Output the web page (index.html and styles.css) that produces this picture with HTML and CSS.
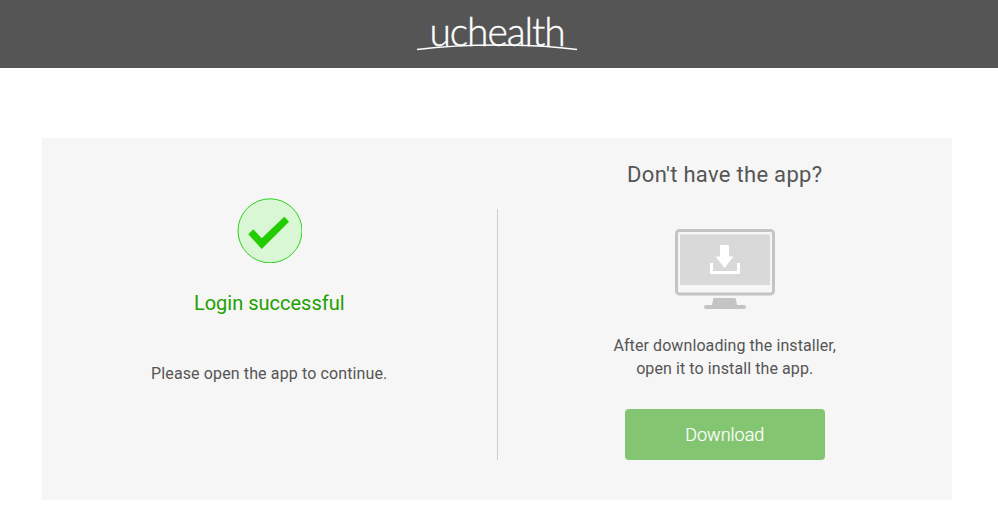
FILE: index.html
```html
<!DOCTYPE html>
<html lang="en">
<head>
<meta charset="utf-8">
<title>uchealth</title>
<link rel="stylesheet" href="styles.css">
</head>
<body>
<header class="topbar">
  <div class="logo">
    <span class="logo-text">uchealth</span>
    <svg class="logo-arc" width="162" height="10" viewBox="0 0 162 10"><path d="M1 8.500C50 2.500 112 2.500 161 8.500" fill="none" stroke="#fff" stroke-width="1.600"/></svg>
  </div>
</header>
<main class="panel">
  <section class="col col-left">
    <svg class="check" width="65" height="65" viewBox="0 0 65 65">
      <circle cx="33" cy="32.800" r="32" fill="#d9f7d4" stroke="#2fd01f" stroke-width="1"/>
      <path d="M11.300 36.300L16.300 31.300L24.700 40.300L47.300 18.700L52 23.700L24.700 51Z" fill="#22cc00"/>
    </svg>
    <h2 class="success">Login successful</h2>
    <p class="hint">Please open the app to continue.</p>
  </section>
  <div class="divider"></div>
  <section class="col col-right">
    <h2 class="title">Don't have the app?</h2>
    <svg class="monitor" width="100" height="82" viewBox="0 0 100 82">
      <rect x="1.500" y="1.500" width="97" height="63.500" rx="3" fill="#f6f6f6" stroke="#c4c4c4" stroke-width="3"/>
      <rect x="5" y="5.500" width="90" height="50.500" fill="#d9d9d9"/>
      <path d="M45 16H54V27.500H58.500L49.500 39L40.500 27.500H45Z" fill="#fff"/>
      <path d="M36.500 34V43.500H63.500V34" fill="none" stroke="#fff" stroke-width="3"/>
      <path d="M38.500 69H60.500L62 76H37Z" fill="#c4c4c4"/>
      <rect x="29" y="76" width="42" height="4" rx="2" fill="#c4c4c4"/>
    </svg>
    <p class="desc">After downloading the installer,<br>open it to install the app.</p>
    <button class="download" type="button">Download</button>
  </section>
</main>
</body>
</html>
```

FILE: styles.css
```css
* { box-sizing: border-box; }
html, body { margin: 0; padding: 0; }
body {
  background: #fff;
  font-family: Roboto, "Liberation Sans", sans-serif;
  color: #555;
  height: 530px;
  overflow: hidden;
}
.topbar {
  height: 68px;
  background: #555;
  display: flex;
  justify-content: center;
}
.logo {
  position: relative;
  left: -2px;
  width: 162px;
  height: 68px;
  text-align: center;
}
.logo-text {
  display: block;
  padding-top: 6px;
  font-family: Lato, sans-serif;
  font-weight: 300;
  font-size: 39px;
  line-height: 50px;
  letter-spacing: -1.1px;
  color: #fff;
  -webkit-text-stroke: .35px #fff;
}
.logo-arc { position: absolute; left: 0; top: 41px; }
.panel {
  margin: 70px 46px 0 42px;
  height: 362px;
  background: #f6f6f6;
  display: flex;
}
.col {
  flex: 1;
  display: flex;
  flex-direction: column;
  align-items: center;
}
.col-left { padding-top: 60px; }
.check { display: block; }
.success {
  margin: 25px 0 0;
  font-size: 20px;
  line-height: 30px;
  font-weight: 400;
  color: #22a000;
}
.hint {
  margin: 44px 0 0;
  font-size: 16px;
  line-height: 24px;
  letter-spacing: .125px;
}
.divider {
  width: 1px;
  margin: 71px 0 40px;
  background: #ccc;
}
.col-right { padding-top: 21px; }
.title {
  margin: 0;
  font-size: 22px;
  line-height: 32px;
  font-weight: 400;
  letter-spacing: .3px;
}
.monitor { margin-top: 38px; display: block; }
.desc {
  margin: 23px 0 0;
  font-size: 16px;
  line-height: 23px;
  text-align: center;
  letter-spacing: .09px;
}
.download {
  margin-top: 29px;
  width: 200px;
  height: 51px;
  border: 0;
  border-radius: 4px;
  background: #84c571;
  color: #fff;
  font-family: inherit;
  font-size: 18px;
  font-weight: 300;
  -webkit-text-stroke: .2px #fff;
}
```
